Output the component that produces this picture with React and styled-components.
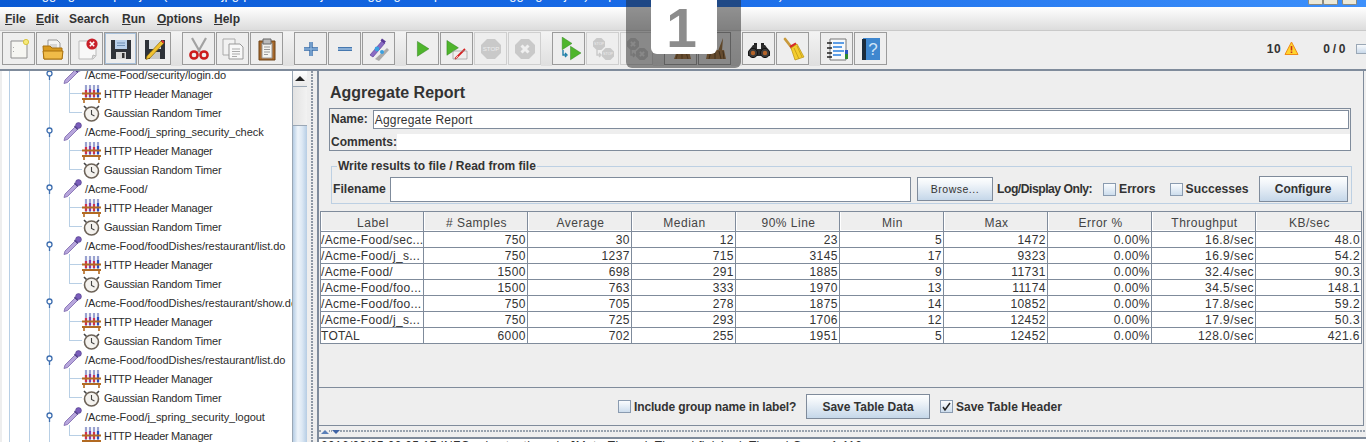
import React from 'react';
import styled, { createGlobalStyle } from 'styled-components';

const Global = createGlobalStyle`
  html, body { margin: 0; padding: 0; background: #eee; }
  * { box-sizing: border-box; }
`;

const LINE = '#7f8b9b';
const SANS = '"Liberation Sans", Arial, sans-serif';

const Page = styled.div`
  position: relative; width: 1366px; height: 442px; overflow: hidden;
  display: flex; flex-direction: column; background: #eee; color: #333;
  font: 12px ${SANS};
`;
const TitleBar = styled.div`
  height: 7px; flex: none; display: flex; align-items: flex-end; overflow: hidden;
  background: linear-gradient(90deg, #0a5ad4, #1a6ce8 50%, #3d90fb);
  color: #fff; padding: 0 2px 0 33px;
`;
const TitleText = styled.span`
  font: 13px ${SANS}; white-space: pre; line-height: 15px; margin-bottom: 5px; flex: none; width: 1275px; height: 15px; overflow: hidden;
`;
const WinBtn = styled.span`
  width: 15px; height: 5px; flex: none; align-self: flex-start; margin-left: ${p => p.$gap || 0}px;
  background: #ece9d8; border: 1px solid #8d8a7c; border-top: 0; border-radius: 0 0 2px 2px;
`;
const MenuBar = styled.div`
  height: 24px; flex: none; display: flex; align-items: center; padding: 0 0 0 5px;
  background: linear-gradient(#fff, #dcdcdc); border-bottom: 1px solid #c9c9c9;
`;
const Menu = styled.span`
  font-weight: 700; font-size: 12px; width: ${p => p.$w}px; color: #333;
  u { text-underline-offset: 1px; }
`;
const Toolbar = styled.div`
  height: 38px; flex: none; display: flex; align-items: flex-start; padding: 1px 0 0 2px; background: #eee;
`;
const ToolGroup = styled.div`display: flex; gap: 1px;`;
const ToolSep = styled.div`
  width: 11px; height: 34px; flex: none; background: linear-gradient(#f3f3f3, #dfdfdf);
`;
const ToolBtn = styled.div`
  width: 33px; height: 33px; flex: none; display: flex; align-items: center; justify-content: center;
  border: 1px solid ${p => p.$off ? '#cfcfcf' : '#9b9b9b'}; background: #eee;
  ${p => p.$focus && 'box-shadow: inset 0 0 0 1px #a9c1da;'}
`;
const Status = styled.div`
  margin-left: auto; display: flex; align-items: center; height: 33px; font-weight: 700; font-size: 12px; color: #333;
`;
const StatusCount = styled.span`
  margin-left: ${p => p.$ml || 0}px; margin-right: ${p => p.$mr}px; word-spacing: ${p => p.$ws || 0}px; letter-spacing: .5px;
`;
const StatusBox = styled.span`
  width: 10px; height: 10px; border: 1px solid #9aa7b5; border-right: 0;
  background: linear-gradient(#f8fafc, #c9d9ea);
`;
const Main = styled.div`
  flex: 1; min-height: 0; display: flex; border-top: 2px solid ${LINE};
`;
const TreePane = styled.div`
  width: 292px; flex: none; overflow: hidden; background:
    linear-gradient(#b8cfe5, #b8cfe5) 7px 0 / 1px 100% no-repeat,
    linear-gradient(#b8cfe5, #b8cfe5) 27px 0 / 1px 100% no-repeat,
    #fff;
  background-origin: padding-box;
  border-left: 2px solid #eee;
`;
const TreeInner = styled.div`margin: -6px 0 0 -2px;`;
const Row = styled.div`
  position: relative; height: 19px; display: flex; align-items: center; white-space: nowrap;
  padding-left: ${p => p.$child ? 82 : 46}px; font-size: 11px; color: #2c2c2c;
  ${p => p.$child && `
    &::before { content: ''; position: absolute; left: 69px; top: ${p.$first ? -1 : -10}px; height: ${p.$first ? 10 : 19}px; width: 12px;
      border-left: 1px solid #b8cfe5; border-bottom: 1px solid #b8cfe5; }
    &::after { content: ''; position: absolute; left: 49px; top: 0; bottom: 0; width: 1px; background: #b8cfe5; }
  `}
`;
const RowGap = styled.span`width: 9px; flex: none;`;
const RowText = styled.span`margin-left: 3px; flex: none; padding-top: 1px; letter-spacing: ${p => p.$ls}px;`;
const Scroll = styled.div`
  width: 15px; flex: none; display: flex; flex-direction: column; background: #eee; border-left: 1px solid #9aa7b5;
`;
const ScrollUp = styled.div`
  height: 16px; flex: none; display: flex; align-items: center; justify-content: center; border-bottom: 1px solid #9aa7b5;
  background: linear-gradient(#fff, #e8e8e8);
  &::after { content: ''; border: 4px solid transparent; border-top: 0; border-bottom: 5px solid #222; border-left-width: 5px; border-right-width: 5px; }
`;
const ScrollTrack = styled.div`height: 38px; flex: none; background: linear-gradient(90deg, #e2e2e2, #f2f2f2);`;
const ScrollThumb = styled.div`
  flex: 1; border-top: 1px solid #9aa7b5; background: linear-gradient(90deg, #b6cde4, #eef4fa 35%, #dce8f4 65%, #b6cde4);
`;
const VSplit = styled.div`
  width: 10px; flex: none; background: radial-gradient(circle at 1px 1px, #8e98a5 .8px, transparent 1px) 4px 0 / 3px 3px repeat-y, #eee;
`;
const Right = styled.div`
  flex: 1; min-width: 0; display: flex; flex-direction: column; border-left: 2px solid ${LINE};
`;
const Report = styled.div`
  flex: none; height: 317px; display: flex; flex-direction: column; border-right: 1px solid ${LINE}; margin-right: 2px;
`;
const Heading = styled.div`
  height: 37px; flex: none; padding: 12px 0 0 11px; font-size: 16px; line-height: 19px; font-weight: 700; color: #333;
`;
const NamePanel = styled.div`
  margin: 0 12px 0 10px; height: 43px; flex: none; border: 1px solid ${LINE}; display: flex; flex-direction: column;
`;
const NameRow = styled.div`
  display: flex; align-items: flex-start; height: 25px; flex: none; font-weight: 700; padding: 0 1px; line-height: 21px;
`;
const NameInput = styled.div`
  flex: 1; margin-left: 5px; margin-top: 1px; height: 19px; background: #fff; border: 1px solid ${LINE};
  font-weight: 400; line-height: 18px; padding-left: 1px; letter-spacing: .2px; color: #333;
`;
const CommentRow = styled.div`
  flex: 1; display: flex; align-items: center; font-weight: 700; padding: 0 0 0 1px;
`;
const CommentBox = styled.div`flex: 1; background: #fff; align-self: stretch;`;
const FileSet = styled.fieldset`
  margin: 8px 11px 0 12px; padding: 3px 2px 0 1px; height: 45px; flex: none; border: 1px solid #bdd0e3; min-width: 0;
`;
const Legend = styled.legend`
  margin-left: 4px; padding: 0 1px; font-weight: 700; font-size: 12px; line-height: 14px; color: #333;
`;
const FileRow = styled.div`
  display: flex; align-items: center; height: 26px; width: 100%; font-weight: 700; font-size: 12.2px; white-space: nowrap;
`;
const FileLabel = styled.span`width: 57px; flex: none;`;
const FileInput = styled.div`
  width: 521px; height: 25px; background: #fff; border: 1px solid ${LINE}; flex: none;
`;
const Btn = styled.div`
  display: flex; align-items: center; justify-content: center; flex: none; white-space: nowrap;
  width: ${p => p.$w}px; height: ${p => p.$h}px; margin-left: ${p => p.$ml || 0}px;
  border: 1px solid ${LINE}; background: linear-gradient(#fdfefe, #f2f6fa 25%, #c5d7e9);
  font-weight: ${p => p.$light ? 400 : 700}; font-size: ${p => p.$light ? 10.5 : 12}px; color: #333;
  letter-spacing: ${p => p.$light ? .5 : 0}px;
`;
const Check = styled.span`
  width: 13px; height: 13px; flex: none; margin-left: ${p => p.$ml || 0}px; margin-right: 3px; border: 1px solid #8a9bb0;
  background: linear-gradient(#fafcfe, #cddded); display: inline-flex; align-items: center; justify-content: center;
`;
const OnlyLabel = styled.span`margin-left: 4px; width: 96px; flex: none; letter-spacing: -.5px;`;
const Table = styled.table`
  margin: 7px 0 0 1px; width: 1041px; border-collapse: collapse; table-layout: fixed; flex: none;
  border-top: 1px solid ${LINE}; border-left: 1px solid ${LINE};
`;
const Th = styled.th`
  height: 20px; padding: 3px 0 0 2px; font-weight: 400; font-size: 12px; letter-spacing: .5px; color: #444; background: #eee;
  border-right: 1px solid ${LINE}; border-bottom: 1px solid ${LINE}; box-shadow: inset 1px 0 0 #fff, inset 0 -1px 0 #fff;
`;
const Td = styled.td`
  height: 16px; padding: 0 1px 0 ${p => p.$left ? 0 : 1}px; background: #fff; font-size: 12px; line-height: 14px;
  letter-spacing: ${p => p.$left ? .3 : .45}px; color: #333;
  border-right: 1px solid ${LINE}; border-bottom: 1px solid ${LINE};
  text-align: ${p => p.$left ? 'left' : 'right'}; white-space: nowrap; overflow: hidden;
`;
const TableRest = styled.div`flex: 1; border-bottom: 1px solid ${LINE};`;
const Controls = styled.div`
  height: 38px; flex: none; display: flex; align-items: center; padding-left: 299px; font-weight: 700; font-size: 12px; white-space: nowrap;
  border-bottom: 1px solid ${LINE}; border-right: 1px solid ${LINE}; margin-right: 2px;
`;
const IncludeLabel = styled.span`width: 162px; flex: none; letter-spacing: -.14px;`;
const HSplit = styled.div`
  height: 11px; flex: none; display: flex; align-items: center; gap: 3px; padding-left: 2px;
  background: radial-gradient(circle at 1px 1px, #98a2ae .8px, transparent 1px) 0 4px / 3px 3px repeat-x, #eee;
`;
const Arrow = styled.span`
  width: 0; height: 0; flex: none; background: #eee; border: 4px solid transparent;
  ${p => p.$up ? 'border-top: 0; border-bottom: 4px solid #5a7fb8;' : 'border-bottom: 0; border-top: 4px solid #3f63a5;'}
`;
const Log = styled.div`
  flex: 1; background: #fff; border-top: 2px solid ${LINE}; padding-left: 2px; white-space: pre; font-size: 12px; line-height: 14px; color: #333; letter-spacing: .3px;
  overflow: hidden;
`;
const Overlay = styled.div`
  position: absolute; left: 626px; top: 0; width: 115px; height: 68px; background: rgba(35,35,35,.5); border-radius: 0 0 6px 6px;
  display: flex; justify-content: center; align-items: flex-start;
`;
const OverlayCard = styled.div`
  width: 66px; height: 54px; background: #fff; border-radius: 0 0 6px 6px; color: #8c8c8c;
  font: 700 55px/56px ${SANS}; text-align: center; padding-right: 4px;
`;

/* ---------- drawings ---------- */
const Svg = ({ children, s = 24 }) => <svg width={s} height={s} viewBox="0 0 24 24" style={{ display: 'block', flex: 'none' }}>{children}</svg>;

const IcNew = () => <Svg><path d="M4 4h14l2 2v15H4z" fill="#f6f6f2" stroke="#8f8f8f" /><circle cx="19" cy="5" r="2.6" fill="#f6ea7a" stroke="#d8c440" /><path d="M6.5 10v1M6.5 14v1" stroke="#aaa" /></Svg>;
const IcOpen = () => <Svg><path d="M7 3h9l3 3v9H7z" fill="#f4f4f4" stroke="#999" /><path d="M9 8h7M9 10h7" stroke="#bbb" /><path d="M2 9h7l2 2h10v11H3z" fill="#d99a1f" stroke="#a8700f" /><path d="M2 14h20l-1 8H3z" fill="#f0bb48" stroke="#a8700f" /></Svg>;
const IcClose = () => <Svg><path d="M4 4h11l6 6v9l-3 3H4z" fill="#f8f8f8" stroke="#bbb" /><path d="M17 22l1-4 3 1" fill="#ddd" stroke="#bbb" /><circle cx="17" cy="7" r="5.6" fill="#c8202a" /><path d="M14.8 4.8l4.4 4.4M19.2 4.8l-4.4 4.4" stroke="#fff" strokeWidth="1.6" /></Svg>;
const IcSave = () => <Svg><path d="M2 3h20v19H2z" fill="#2e3238" /><path d="M6 3h12v9H6z" fill="#b9d0ea" /><path d="M8 6h8M8 8.500h8" stroke="#6f8fb5" /><path d="M7 15h10v7H7z" fill="#d8d8d8" /><path d="M13 16h2.500v5H13z" fill="#333" /></Svg>;
const IcSaveAs = () => <Svg><path d="M2 3h20v19H2z" fill="#2e3238" /><path d="M6 3h12v9H6z" fill="#d9dde2" /><path d="M7 15h10v7H7z" fill="#c8c8c8" /><path d="M4 19L18 4l2.500 2.500L7 21l-4 1.500z" fill="#f2c230" stroke="#8a6a10" strokeWidth=".7" /><path d="M18 4l2.500 2.500 1-1.500-2-2z" fill="#d33" /></Svg>;
const IcCut = () => <Svg><path d="M5 1l8 14M19 1l-8 14" stroke="#a2a2a2" strokeWidth="2.200" /><circle cx="7" cy="18" r="3.600" fill="none" stroke="#cc1c1c" strokeWidth="2.500" /><circle cx="17" cy="18" r="3.600" fill="none" stroke="#cc1c1c" strokeWidth="2.500" /></Svg>;
const IcCopy = () => <Svg><path d="M2 2h12v16H2z" fill="#f2f2f2" stroke="#aaa" /><path d="M8 7h11l3 3v12H8z" fill="#f8f8f8" stroke="#999" /><path d="M11 12h8M11 14.500h8M11 17h8M11 19.500h5" stroke="#aaa" /></Svg>;
const IcPaste = () => <Svg><path d="M4 4h16v19H4z" fill="#a8692a" stroke="#6f4518" /><path d="M7 6h10v15H7z" fill="#f4f4f0" stroke="#999" /><path d="M8 2h8v5H8z" fill="#bbb" stroke="#666" /><path d="M9 10h6M9 12.500h6M9 15h6M9 17.500h4" stroke="#999" /></Svg>;
const IcPlus = () => <Svg><path d="M5 12h14M12 5v14" stroke="#336aa8" strokeWidth="3.400" /><path d="M5 12h14M12 5v14" stroke="#8db4dc" strokeWidth="1.400" /></Svg>;
const IcMinus = () => <Svg><path d="M5 12h14" stroke="#336aa8" strokeWidth="3.800" /><path d="M5 12h14" stroke="#9fc0e2" strokeWidth="1.600" /></Svg>;
const IcToggle = () => <Svg><path d="M8 22l12-11 2 2-10 11z" fill="#aaa" /><path d="M3 18L15 4l3 2L6 20z" fill="#8a6cc4" stroke="#5e3f9c" strokeWidth=".7" /><path d="M15 1.500l4 3-2 2-3.500-3z" fill="#5a3a96" /><circle cx="10" cy="12" r="2.400" fill="#3aa0e0" /><circle cx="15" cy="15" r="2" fill="#3aa0e0" /></Svg>;
const Tri = ({ x = 0, y = 0, k = 1 }) => <path transform={`translate(${x} ${y}) scale(${k})`} d="M6 3l14 9-14 9z" fill="#4fb52c" stroke="#2a7d18" strokeWidth=".6" />;
const IcStart = () => <Svg><Tri x="1.500" y="2" k=".82" /></Svg>;
const IcStartNo = () => <Svg><Tri x="-3" y="1" k=".82" /><path d="M10 22l10-10" stroke="#d62020" strokeWidth="1.800" /><path d="M11 21l2-2" stroke="#fff" strokeWidth=".7" /><path d="M8 14h14v8H8z" fill="none" stroke="#999" strokeWidth=".7" /></Svg>;
const Oct = ({ x = 12, y = 12, r = 10, label }) => <g>
  <path transform={`translate(${x} ${y}) scale(${r / 10})`} d="M-4-10h8l6 6v8l-6 6h-8l-6-6v-8z" fill="#c9c9c9" />
  {label === 'x' && <path d={`M${x - r * .35} ${y - r * .35}l${r * .7} ${r * .7}M${x + r * .35} ${y - r * .35}l${-r * .7} ${r * .7}`} stroke="#efefef" strokeWidth={r * .3} />}
  {label === 'stop' && <text x={x} y={y + r * .22} fontSize={r * .62} fill="#eee" textAnchor="middle" fontFamily={'"Liberation Sans"'}>STOP</text>}
</g>;
const IcStop = () => <Svg><Oct label="stop" /></Svg>;
const IcShut = () => <Svg><Oct label="x" /></Svg>;
const Hook = ({ c }) => <path d="M6 13v5h3M8 16l2 2-2 2" fill="none" stroke={c} strokeWidth="1.400" />;
const IcRStart = () => <Svg><Tri x="1" y="-2" k=".7" /><Tri x="9" y="7" k=".75" /><Hook c="#1f7fa8" /></Svg>;
const IcRStop = () => <Svg><Oct x={8} y={7} r={6} label="stop" /><Oct x={17} y={17} r={6} label="stop" /><Hook c="#c9c9c9" /></Svg>;
const IcRShut = () => <Svg><Oct x={8} y={7} r={6} label="x" /><Oct x={17} y={17} r={6} label="x" /><Hook c="#c9c9c9" /></Svg>;
const IcClear = () => <Svg><path d="M14 2l-2 12h6z" fill="#a06a2c" /><path d="M8 14h12l2 8H5z" fill="#a8743a" /><path d="M9 15l-2 7M13 15v7M17 15l2 7" stroke="#6f4518" /></Svg>;
const IcClearAll = () => <Svg><path d="M6 3l3 11h5zM20 1l-5 13h4z" fill="#9a6a30" /><path d="M5 13h16l2 9H3z" fill="#a8743a" /><path d="M8 14l-2 8M12 14v8M16 14l2 8M20 14l1 8" stroke="#5f3c14" /></Svg>;
const IcBino = () => <Svg><path d="M7 6h3v5H7zM14 6h3v5h-3z" fill="#222" /><path d="M1 15l5-7h4v4h4V8h4l5 7v4H1z" fill="#2c2c2c" /><circle cx="6" cy="16" r="4.600" fill="#3a3a3a" stroke="#111" /><circle cx="18" cy="16" r="4.600" fill="#3a3a3a" stroke="#111" /><circle cx="6" cy="16" r="2.200" fill="#b5642a" /><circle cx="18" cy="16" r="2.200" fill="#b5642a" /></Svg>;
const IcBroom = () => <Svg><path d="M4 2l7 9" stroke="#c99a3c" strokeWidth="2.800" strokeLinecap="round" /><path d="M8.500 9l6-3.500 1.500 2.500-6 3.500z" fill="#d8262a" /><path d="M10 11l6-4 7 13-9 3z" fill="#f4cd2e" stroke="#b88f10" strokeWidth=".7" /><path d="M13 11l5 11M16 9l5 11" stroke="#b88f10" strokeWidth=".7" /></Svg>;
const IcFuncs = () => <Svg><path d="M5 2h16v21H5z" fill="#f7f9fb" stroke="#777" /><path d="M8 6h11M8 10h9M8 14h11M8 18h8" stroke="#2a7fe0" strokeWidth="1.400" /><path d="M2 6h5M2 11h5M2 16h5M2 20h5" stroke="#222" strokeWidth="1.500" /><path d="M20 13h3v4h-3z" fill="#2a55c0" /><path d="M20 17h3v5h-3z" fill="#2e8a2e" /></Svg>;
const IcHelp = () => <Svg><path d="M4 1h17v22H4z" fill="#3f87cf" /><path d="M3 2h4v21H3z" fill="#1c2c3c" /><text x="14" y="18" fontSize="17" fill="#cfe4f8" textAnchor="middle" fontFamily={'"Liberation Sans"'}>?</text></Svg>;

const Handle = () => <svg width="8" height="19" viewBox="0 0 8 19" style={{ display: 'block', flex: 'none' }}>
  <path d="M3.500 0v19" stroke="#b8cfe5" /><circle cx="3.500" cy="8.500" r="2.500" fill="#fff" stroke="#3f6fb0" strokeWidth="1.300" /><path d="M3.500 11v4" stroke="#3f6fb0" strokeWidth="1.300" />
</svg>;
const Sampler = () => <svg width="19" height="19" viewBox="0 0 19 19" style={{ display: 'block', flex: 'none' }}>
  <path d="M1 18.500l1-3.500L12 5l2.500 2.500L4.500 17.500z" fill="#b7a6dc" stroke="#7a64ab" strokeWidth=".8" />
  <path d="M11 4.500l3.500 3.500 1-1L12 3.500z" fill="#4c3a84" />
  <circle cx="15.500" cy="3.500" r="2.900" fill="#7a5dbb" stroke="#4c3a84" strokeWidth=".6" />
</svg>;
const HeaderMgr = () => <svg width="19" height="19" viewBox="0 0 19 19" style={{ display: 'block', flex: 'none' }}>
  <path d="M4 1v13M8 1v13M12 1v13M16 1v13" stroke="#9aa2d0" strokeWidth="2.200" />
  <path d="M4 6v7" stroke="#d0304a" strokeWidth="2.200" /><path d="M8 5v8" stroke="#7b3fb0" strokeWidth="2.200" /><path d="M12 6v7" stroke="#d0304a" strokeWidth="2.200" /><path d="M16 5v8" stroke="#2c4dc0" strokeWidth="2.200" />
  <path d="M0 9.500h19M0 15h19" stroke="#b26a22" strokeWidth="2" /><path d="M2 16v3M17 16v3" stroke="#b26a22" strokeWidth="1.600" />
</svg>;
const Timer = () => <svg width="19" height="19" viewBox="0 0 19 19" style={{ display: 'block', flex: 'none' }}>
  <path d="M2 3l2.500 2.500M17 3l-2.500 2.500" stroke="#444" strokeWidth="1.600" />
  <circle cx="9.500" cy="11" r="7" fill="#f4f2ee" stroke="#6d6358" strokeWidth="1.600" />
  <path d="M9.500 7v4.500l3 1.500" fill="none" stroke="#444" strokeWidth="1.100" />
</svg>;
const Warn = () => <svg width="15" height="15" viewBox="0 0 15 15" style={{ display: 'block', flex: 'none' }}>
  <path d="M7.500 1L14 13.500H1z" fill="#ffd52e" stroke="#f08a16" strokeLinejoin="round" />
  <path d="M7.500 5v4.500M7.500 10.500v1.600" stroke="#c8321a" strokeWidth="1.600" />
</svg>;
const Tick = () => <svg width="11" height="11" viewBox="0 0 11 11" style={{ display: 'block' }}><path d="M2 6l2 3 5-7" fill="none" stroke="#222" strokeWidth="1.500" /></svg>;

/* ---------- data ---------- */
const MENUS = [['F', 'ile', 31], ['E', 'dit', 33], ['', 'Search', 53], ['R', 'un', 35], ['O', 'ptions', 57], ['H', 'elp', 40]];
const TOOLS = [
  [[IcNew], [IcOpen], [IcClose], [IcSave, 'focus'], [IcSaveAs]],
  [[IcCut], [IcCopy], [IcPaste]],
  [[IcPlus], [IcMinus], [IcToggle]],
  [[IcStart], [IcStartNo], [IcStop, 'off'], [IcShut, 'off']],
  [[IcRStart], [IcRStop, 'off'], [IcRShut, 'off']],
  [[IcClear], [IcClearAll]],
  [[IcBino], [IcBroom]],
  [[IcFuncs], [IcHelp]],
];
const SAMPLERS = [
  '/Acme-Food/security/login.do', '/Acme-Food/j_spring_security_check', '/Acme-Food/',
  '/Acme-Food/foodDishes/restaurant/list.do', '/Acme-Food/foodDishes/restaurant/show.do',
  '/Acme-Food/foodDishes/restaurant/list.do', '/Acme-Food/j_spring_security_logout',
];
const HEAD = ['Label', '# Samples', 'Average', 'Median', '90% Line', 'Min', 'Max', 'Error %', 'Throughput', 'KB/sec'];
const WIDTHS = [103, 104, 104, 104, 104, 104, 104, 104, 104, 106];
const DATA = [
  ['/Acme-Food/sec...', 750, 30, 12, 23, 5, 1472, '0.00%', '16.8/sec', '48.0'],
  ['/Acme-Food/j_s...', 750, 1237, 715, 3145, 17, 9323, '0.00%', '16.9/sec', '54.2'],
  ['/Acme-Food/', 1500, 698, 291, 1885, 9, 11731, '0.00%', '32.4/sec', '90.3'],
  ['/Acme-Food/foo...', 1500, 763, 333, 1970, 13, 11174, '0.00%', '34.5/sec', '148.1'],
  ['/Acme-Food/foo...', 750, 705, 278, 1875, 14, 10852, '0.00%', '17.8/sec', '59.2'],
  ['/Acme-Food/j_s...', 750, 725, 293, 1706, 12, 12452, '0.00%', '17.9/sec', '50.3'],
  ['TOTAL', 6000, 702, 255, 1951, 5, 12452, '0.00%', '128.0/sec', '421.6'],
];

export default function App() {
  return (
    <Page>
      <Global />
      <TitleBar>
        <TitleText>Aggregate Report.jmx (C:\Users\jpgq\Acme-Food\jmeter\aggregate\report\results\aggregate.jmx) - Apache JMeter (2.13 r1665067)</TitleText>
        <WinBtn /><WinBtn /><WinBtn $gap={4} />
      </TitleBar>
      <MenuBar>
        {MENUS.map(([u, rest, w]) => <Menu key={rest} $w={w}><u>{u}</u>{rest}</Menu>)}
      </MenuBar>
      <Toolbar>
        {TOOLS.map((group, i) => (
          <React.Fragment key={i}>
            {i > 0 && <ToolSep />}
            <ToolGroup>
              {group.map(([Icon, state], j) => (
                <ToolBtn key={j} $off={state === 'off'} $focus={state === 'focus'}><Icon /></ToolBtn>
              ))}
            </ToolGroup>
          </React.Fragment>
        ))}
        <Status>
          <StatusCount $mr={3}>10</StatusCount>
          <Warn />
          <StatusCount $ml={24} $mr={10} $ws={-1.5}>0 / 0</StatusCount>
          <StatusBox />
        </Status>
      </Toolbar>
      <Main>
        <TreePane>
          <TreeInner>
            {SAMPLERS.map((s, i) => (
              <React.Fragment key={i}>
                <Row><Handle /><RowGap /><Sampler /><RowText $ls={-.05}>{s}</RowText></Row>
                <Row $child $first><HeaderMgr /><RowText $ls={-.3}>HTTP Header Manager</RowText></Row>
                {i < 6 && <Row $child><Timer /><RowText $ls={-.2}>Gaussian Random Timer</RowText></Row>}
              </React.Fragment>
            ))}
          </TreeInner>
        </TreePane>
        <Scroll><ScrollUp /><ScrollTrack /><ScrollThumb /></Scroll>
        <VSplit />
        <Right>
          <Report>
            <Heading>Aggregate Report</Heading>
            <NamePanel>
              <NameRow>Name:<NameInput>Aggregate Report</NameInput></NameRow>
              <CommentRow>Comments:<CommentBox /></CommentRow>
            </NamePanel>
            <FileSet>
              <Legend>Write results to file / Read from file</Legend>
              <FileRow>
                <FileLabel>Filename</FileLabel>
                <FileInput />
                <Btn $w={76} $h={24} $ml={6} $light>Browse...</Btn>
                <OnlyLabel>Log/Display Only:</OnlyLabel>
                <Check $ml={10} /><span>Errors</span>
                <Check $ml={14} /><span>Successes</span>
                <Btn $w={89} $h={26} $ml={10}>Configure</Btn>
              </FileRow>
            </FileSet>
            <Table>
              <colgroup>{WIDTHS.map((w, i) => <col key={i} style={{ width: w }} />)}</colgroup>
              <thead><tr>{HEAD.map(h => <Th key={h}>{h}</Th>)}</tr></thead>
              <tbody>
                {DATA.map((r, i) => <tr key={i}>{r.map((c, j) => <Td key={j} $left={j === 0}>{c}</Td>)}</tr>)}
              </tbody>
            </Table>
            <TableRest />
          </Report>
          <Controls>
            <Check /><IncludeLabel>Include group name in label?</IncludeLabel>
            <Btn $w={124} $h={25} $ml={10}>Save Table Data</Btn>
            <Check $ml={10}><Tick /></Check><span>Save Table Header</span>
          </Controls>
          <HSplit><Arrow $up /><Arrow /></HSplit>
          <Log>2016/09/05 00:05:17 INFO  - jmeter.threads.JMeterThread: Thread finished: Thread Group 1-112</Log>
        </Right>
      </Main>
      <Overlay><OverlayCard>1</OverlayCard></Overlay>
    </Page>
  );
}
